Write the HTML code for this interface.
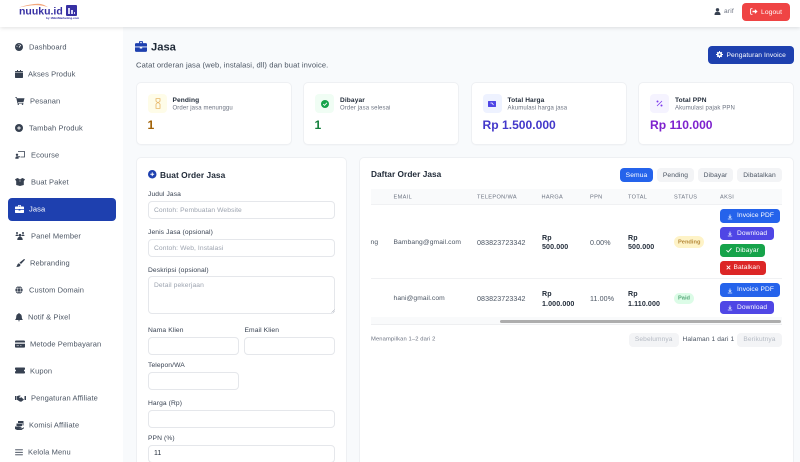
<!DOCTYPE html>
<html><head><meta charset="utf-8"><style>
html,body{margin:0;padding:0;width:800px;height:462px;overflow:hidden}
body{background:#f8fafc;font-family:"Liberation Sans",sans-serif;color:#374151}
#w{position:absolute;left:0;top:0;width:800px;height:462px;overflow:hidden;background:#f8fafc;filter:blur(.22px)}
.t{position:absolute;white-space:nowrap;transform:translateY(-50%);line-height:1.2}
.b{position:absolute;box-sizing:border-box}
.s{font-size:7.5px;color:#4b5563;letter-spacing:.1px}
.sw{color:#fff}
svg{position:absolute;overflow:visible}
.card{position:absolute;background:#fff;border:1px solid #eef0f3;border-radius:5px;box-sizing:border-box;box-shadow:0 1px 1px rgba(0,0,0,.02)}
.ic{position:absolute;width:19px;height:19px;border-radius:4px;top:94px}
.h1{font-size:6.6px;font-weight:bold;color:#1f2937;letter-spacing:.1px;margin-top:1px}
.h2{font-size:6px;color:#6b7280;letter-spacing:.12px;margin-top:1px}
.v{font-size:12.1px;font-weight:bold}
.l{font-size:6.7px;color:#374151;letter-spacing:.1px;margin-top:1px}
.in{position:absolute;box-sizing:border-box;background:#fff;border:1px solid #e5e7eb;border-radius:4px;height:18px}
.p{font-size:6.7px;color:#9ca3af;letter-spacing:.1px;margin-top:1px}
.th{font-size:5.6px;color:#6b7280;letter-spacing:.35px;margin-top:.6px}
.td{font-size:6.7px;color:#4b5563;letter-spacing:.1px;margin-top:.5px}
.n{font-size:7.1px;color:#4b5563;letter-spacing:.1px;margin-top:.5px}
.bd{font-size:7.1px;font-weight:bold;color:#1f2937;letter-spacing:.1px;margin-top:.5px}
.f{position:absolute;top:168px;height:14px;border-radius:4px;background:#f3f4f6;color:#4b5563;font-size:6.7px;text-align:center;line-height:15px;letter-spacing:.1px}
.a{position:absolute;height:13.5px;border-radius:3.5px;color:#fff;font-size:6.6px;line-height:14.5px;box-sizing:border-box;letter-spacing:.1px;white-space:nowrap}
.pg{position:absolute;top:333px;height:13.5px;border-radius:4px;background:#f3f4f6;color:#b4bac3;font-size:6.6px;text-align:center;line-height:14.5px;letter-spacing:.1px}
</style></head><body><div id="w">

<!-- sidebar -->
<div class="b" style="left:0;top:0;width:123px;height:462px;background:#fff"></div>
<!-- header -->
<div class="b" style="left:0;top:0;width:800px;height:27px;background:#fff;box-shadow:0 1px 4px rgba(0,0,0,.12)"></div>

<!-- logo -->
<svg style="left:19px;top:3px" width="30" height="6" viewBox="0 0 30 6"><path d="M0 4.500C7 2 14 1 19 .8c4 0 7 1.500 10 3.500C24 2.500 20 2 15 2.200 9 2.500 5 3.500 0 4.500z" fill="#f3a77c"/></svg>
<div class="t" style="left:19px;top:11.500px;font-size:10.500px;font-weight:bold;color:#3730a3">nuuku.id</div>
<div class="b" style="left:66px;top:5px;width:11px;height:11px;background:#3730a3;border-radius:1px"></div>
<div class="b" style="left:68px;top:8px;width:2px;height:6px;background:#d8d6f5"></div>
<div class="b" style="left:71px;top:10px;width:1.500px;height:4px;background:#d8d6f5"></div>
<div class="b" style="left:73.500px;top:11.500px;width:1.500px;height:2.500px;background:#d8d6f5"></div>
<div class="t" style="left:46px;top:18.500px;font-size:3px;color:#3730a3;font-weight:bold">by 1MiniMarketing.com</div>

<!-- header right -->
<svg style="left:714px;top:8px" width="7" height="7" viewBox="0 0 7 7"><circle cx="3.500" cy="1.800" r="1.700" fill="#374151"/><path d="M.5 7c0-2.500 1.200-3.200 3-3.200s3 .7 3 3.200z" fill="#374151"/></svg>
<div class="t" style="left:724px;top:12px;font-size:6.600px;color:#6b7280;letter-spacing:.2px">arif</div>
<div class="b" style="left:742px;top:3px;width:48px;height:17.500px;background:#ef4444;border-radius:4px"></div>
<svg style="left:750px;top:8px" width="8" height="7" viewBox="0 0 8 7"><path d="M2.500.7H1.200C.7.700.6 1 .6 1.400v4.200c0 .4.100.7.600.7h1.300" stroke="#fff" stroke-width=".9" fill="none"/><path d="M2.500 2.700h2.400V1.100l2.700 2.400-2.700 2.400V4.300H2.500z" fill="#fff"/></svg>
<div class="t sw" style="left:761px;top:12.500px;font-size:6.700px;letter-spacing:.1px">Logout</div>

<!-- nav active -->
<div class="b" style="left:8px;top:198px;width:108px;height:22.500px;background:#1e40af;border-radius:4px"></div>

<!-- nav icons -->
<svg style="left:15px;top:43px" width="8" height="8" viewBox="0 0 8 8"><circle cx="4" cy="4" r="4" fill="#374151"/><path d="M4 4.500 5.800 2" stroke="#fff" stroke-width=".8"/><circle cx="2" cy="3.200" r=".5" fill="#fff"/><circle cx="4" cy="1.600" r=".5" fill="#fff"/></svg>
<svg style="left:15px;top:70px" width="8" height="8" viewBox="0 0 8 8"><path d="M0 3h8v4.200c0 .4-.3.800-.7.800H.7C.3 8 0 7.600 0 7.200zM.7 1h6.600c.4 0 .7.300.7.700v.800H0v-.8C0 1.300.3 1 .7 1zM2 0h1v1.500H2zM5 0h1v1.500H5z" fill="#374151"/></svg>
<svg style="left:15px;top:97px" width="10" height="8" viewBox="0 0 10 8"><path d="M.3.300h1.600l.3 1h7.300l-1 3.700H3l.2.800h5.300v.7H2.500L1.300 1H.3z" fill="#374151"/><circle cx="3.300" cy="7.300" r=".7" fill="#374151"/><circle cx="7.500" cy="7.300" r=".7" fill="#374151"/></svg>
<svg style="left:15px;top:124px" width="8" height="8" viewBox="0 0 8 8"><circle cx="4" cy="4" r="4" fill="#374151"/><path d="M4 2.200v3.600M2.200 4h3.600" stroke="#fff" stroke-width=".9"/></svg>
<svg style="left:15px;top:151px" width="10" height="8" viewBox="0 0 10 8"><path d="M3 .5h6.500v5.500H5.500" stroke="#374151" stroke-width=".8" fill="none"/><circle cx="2" cy="3.800" r="1.200" fill="#374151"/><path d="M.3 7.700c0-1.800.7-2.500 1.700-2.500h3v1H3.600v1.500z" fill="#374151"/></svg>
<svg style="left:15px;top:178px" width="10" height="8" viewBox="0 0 10 8"><path d="M0 1.200 2.500 0 5 1.200 7.500 0 10 1.200 8.800 3.200V7l-3.800 1L1.200 7V3.200z" fill="#374151"/><path d="M5 1.500V4" stroke="#fff" stroke-width=".4"/></svg>
<svg style="left:15px;top:205px" width="9" height="8" viewBox="0 0 9 8"><path d="M3 1.500V.6c0-.3.200-.6.600-.6h1.800c.4 0 .6.300.6.600v.9h2.100c.5 0 .9.300.9.800v1.700H0V2.300c0-.5.400-.8.900-.8zM3.700.8v.7h1.600V.8zM0 4.700h3.600v.8h1.800v-.8H9v2.500c0 .5-.4.800-.9.800H.9C.4 8 0 7.700 0 7.200z" fill="#fff"/></svg>
<svg style="left:15px;top:232px" width="10" height="8" viewBox="0 0 10 8"><g fill="#374151"><circle cx="2" cy="1" r="1"/><circle cx="8" cy="1" r="1"/><circle cx="5" cy="3.200" r="1.300"/><path d="M.5 4c0-1 .5-1.500 1.500-1.500S3.500 3 3.500 4zM6.500 4c0-1 .5-1.500 1.500-1.500S9.500 3 9.500 4zM2.300 8c0-2 1-3.200 2.700-3.200S7.700 6 7.700 8z"/></g></svg>
<svg style="left:16px;top:259px" width="9" height="8" viewBox="0 0 9 8"><path d="M8.700.2c.3.300 0 .8-.3 1.200L5 5 3.500 3.600 7.400.5c.5-.4 1-.6 1.300-.3zM3 4.200 4.500 5.700c0 1.500-1.500 2.300-4.500 2.100C1.500 7 1 4.500 3 4.200z" fill="#374151"/></svg>
<svg style="left:15px;top:286px" width="8" height="8" viewBox="0 0 8 8"><circle cx="4" cy="4" r="3.700" fill="#374151"/><path d="M4 .2c-2.400 2-2.400 5.600 0 7.600M4 .2c2.400 2 2.400 5.600 0 7.600M.4 2.800h7.200M.4 5.200h7.200" stroke="#fff" stroke-width=".45" fill="none"/></svg>
<svg style="left:15px;top:313px" width="8" height="9" viewBox="0 0 8 9"><path d="M4 0c.4 0 .6.300.6.700C6 1 6.800 2.200 6.800 3.700c0 2 .6 2.500 1.200 3.300H0c.6-.8 1.200-1.300 1.200-3.300 0-1.500.8-2.700 2.200-3C3.400.3 3.600 0 4 0zM3 7.500h2C5 8.500 3 8.500 3 7.500z" fill="#374151"/></svg>
<svg style="left:15px;top:340px" width="10" height="8" viewBox="0 0 10 8"><path d="M1 .5h8c.5 0 1 .4 1 1v1H0v-1c0-.6.500-1 1-1zM0 3.700h10v3c0 .5-.5.900-1 .900H1c-.5 0-1-.4-1-.9z" fill="#374151"/><path d="M1.500 5.800h2.500M5 5.800h1.500" stroke="#fff" stroke-width=".5"/></svg>
<svg style="left:15px;top:367px" width="10" height="7" viewBox="0 0 10 7"><path d="M.8.500h8.400c.4 0 .8.300.8.700v1.300c-.6 0-1 .5-1 1s.4 1 1 1v1.300c0 .4-.4.700-.8.700H.8C.4 6.500 0 6.200 0 5.800V4.500c.6 0 1-.5 1-1s-.4-1-1-1V1.200C0 .8.400.5.800.5z" fill="#374151"/></svg>
<svg style="left:15px;top:395px" width="11" height="7" viewBox="0 0 11 7"><path d="M0 1h1.500v4H0zM9.500 1H11v4H9.500zM2 1.200l2-.7h1l.8.4L4 2.300c1 1 1.500.5 2.200-.2l2.800 2.500-2.500 2H5L2 4.800z" fill="#374151"/></svg>
<svg style="left:15px;top:421px" width="9" height="9" viewBox="0 0 9 9"><path d="M3 0h5.500v4.500H7.500V2H3zM1.500 2.500h5.500v2.500H1.500zM0 5.500h2l1.500-.3c1 0 2 .5 3 .5v1L5 7H3.500l3.500.3 2-1v1L6.500 9H2L0 8z" fill="#374151"/></svg>
<svg style="left:15px;top:449px" width="8" height="7" viewBox="0 0 8 7"><path d="M.5.800h7M.5 3.300h7M.5 5.800h7" stroke="#374151" stroke-width=".9" stroke-linecap="round"/></svg>

<!-- nav text -->
<div class="t s" style="left:29px;top:47px">Dashboard</div>
<div class="t s" style="left:28px;top:74px">Akses Produk</div>
<div class="t s" style="left:30px;top:101px">Pesanan</div>
<div class="t s" style="left:29px;top:128px">Tambah Produk</div>
<div class="t s" style="left:31px;top:155px">Ecourse</div>
<div class="t s" style="left:31px;top:182px">Buat Paket</div>
<div class="t s" style="left:29px;top:209px;color:#fff">Jasa</div>
<div class="t s" style="left:31px;top:236px">Panel Member</div>
<div class="t s" style="left:30px;top:263px">Rebranding</div>
<div class="t s" style="left:29px;top:290px">Custom Domain</div>
<div class="t s" style="left:28px;top:317px">Notif &amp; Pixel</div>
<div class="t s" style="left:30px;top:344px">Metode Pembayaran</div>
<div class="t s" style="left:30px;top:371px">Kupon</div>
<div class="t s" style="left:31px;top:398px">Pengaturan Affiliate</div>
<div class="t s" style="left:29px;top:425px">Komisi Affiliate</div>
<div class="t s" style="left:28px;top:452px">Kelola Menu</div>

<!-- page title -->
<svg style="left:135px;top:41px" width="12" height="11" viewBox="0 0 9 8"><path d="M3 1.500V.6c0-.3.200-.6.600-.6h1.800c.4 0 .6.300.6.600v.9h2.100c.5 0 .9.300.9.800v1.700H0V2.300c0-.5.400-.8.900-.8zM3.700.8v.7h1.600V.8zM0 4.700h3.600v.8h1.800v-.8H9v2.500c0 .5-.4.800-.9.800H.9C.4 8 0 7.700 0 7.200z" fill="#1e40af"/></svg>
<div class="t" style="left:151px;top:47.500px;font-size:11.200px;font-weight:bold;color:#1f2937">Jasa</div>
<div class="t" style="left:136px;top:64.500px;font-size:7.600px;color:#4b5563;letter-spacing:.1px">Catat orderan jasa (web, instalasi, dll) dan buat invoice.</div>

<div class="b" style="left:708px;top:46px;width:86px;height:17.500px;background:#1e40af;border-radius:4px"></div>
<svg style="left:715.500px;top:51px" width="7" height="7" viewBox="0 0 8 8"><circle cx="4" cy="4" r="2.200" fill="none" stroke="#fff" stroke-width="1.700"/><path d="M4 0v8M0 4h8M1.200 1.200l5.600 5.600M6.800 1.200 1.200 6.800" stroke="#fff" stroke-width="1.100"/><circle cx="4" cy="4" r="1.100" fill="#1e40af"/></svg>
<div class="t sw" style="left:726.500px;top:55.500px;font-size:6.700px;letter-spacing:.1px">Pengaturan Invoice</div>

<!-- stat cards -->
<div class="card" style="left:136px;top:81.500px;width:155.500px;height:63px"></div>
<div class="card" style="left:303px;top:81.500px;width:155.500px;height:63px"></div>
<div class="card" style="left:470.500px;top:81.500px;width:156px;height:63px"></div>
<div class="card" style="left:638px;top:81.500px;width:156px;height:63px"></div>

<div class="ic" style="left:148px;background:#fefce8"></div>
<svg style="left:154.500px;top:98px" width="6" height="11" viewBox="0 0 6 11"><path d="M.6.600h4.800M.6 10.400h4.800M1 .6v2.500c0 1 4 1.800 4 3.200v3.900M5 .6v2.500c0 1-4 1.800-4 3.200v3.900" stroke="#e7b667" stroke-width=".8" fill="none"/></svg>
<div class="t h1" style="left:172.500px;top:99.500px">Pending</div>
<div class="t h2" style="left:172.500px;top:108px">Order jasa menunggu</div>
<div class="t v" style="left:147.500px;top:125px;color:#a16207">1</div>

<div class="ic" style="left:315px;background:#f0fdf4"></div>
<svg style="left:320.500px;top:99.500px" width="8" height="8" viewBox="0 0 8 8"><circle cx="4" cy="4" r="4" fill="#16a34a"/><path d="M2.200 4.100 3.500 5.400 5.900 2.800" stroke="#fff" stroke-width=".9" fill="none"/></svg>
<div class="t h1" style="left:340px;top:99.500px">Dibayar</div>
<div class="t h2" style="left:340px;top:108px">Order jasa selesai</div>
<div class="t v" style="left:314.500px;top:125px;color:#15803d">1</div>

<div class="ic" style="left:482.500px;background:#eef2ff"></div>
<svg style="left:488px;top:100.500px" width="8" height="6" viewBox="0 0 8 6"><rect width="8" height="6" rx=".6" fill="#4f46e5"/><path d="M2.500 2h1.500l1.500 2" stroke="#fff" stroke-width=".7" fill="none"/></svg>
<div class="t h1" style="left:507.500px;top:99.500px">Total Harga</div>
<div class="t h2" style="left:507.500px;top:108px">Akumulasi harga jasa</div>
<div class="t v" style="left:482.500px;top:125px;color:#4338ca">Rp 1.500.000</div>

<div class="ic" style="left:650px;background:#f5f3ff"></div>
<svg style="left:656px;top:100px" width="7" height="7" viewBox="0 0 7 7"><path d="M6 1 1 6" stroke="#7c3aed" stroke-width=".8"/><circle cx="1.500" cy="1.500" r="1" fill="#7c3aed"/><circle cx="5.500" cy="5.500" r="1" fill="#7c3aed"/></svg>
<div class="t h1" style="left:675px;top:99.500px">Total PPN</div>
<div class="t h2" style="left:675px;top:108px">Akumulasi pajak PPN</div>
<div class="t v" style="left:650px;top:125px;color:#7e22ce">Rp 110.000</div>

<!-- form card -->
<div class="card" style="left:136px;top:157px;width:211px;height:320px"></div>
<svg style="left:147.500px;top:170px" width="8.500" height="8.500" viewBox="0 0 8 8"><circle cx="4" cy="4" r="4" fill="#1e40af"/><path d="M4 2.200v3.600M2.200 4h3.600" stroke="#fff" stroke-width=".9"/></svg>
<div class="t" style="left:160px;top:175px;font-size:8.400px;font-weight:bold;color:#1f2937;letter-spacing:.04px">Buat Order Jasa</div>

<div class="t l" style="left:148px;top:194px">Judul Jasa</div>
<div class="in" style="left:147.500px;top:201px;width:187.500px"></div>
<div class="t p" style="left:154px;top:210px">Contoh: Pembuatan Website</div>
<div class="t l" style="left:148px;top:232px">Jenis Jasa (opsional)</div>
<div class="in" style="left:147.500px;top:238.500px;width:187.500px"></div>
<div class="t p" style="left:154px;top:247.500px">Contoh: Web, Instalasi</div>
<div class="t l" style="left:148px;top:269.500px">Deskripsi (opsional)</div>
<div class="in" style="left:147.500px;top:276px;width:187.500px;height:38px"></div>
<div class="t p" style="left:154px;top:285px">Detail pekerjaan</div>
<svg style="left:331px;top:309px" width="4" height="4" viewBox="0 0 4 4"><path d="M3.500.5.500 3.500M3.500 2 2 3.500" stroke="#9ca3af" stroke-width=".5"/></svg>
<div class="t l" style="left:148px;top:329.500px">Nama Klien</div>
<div class="t l" style="left:244.500px;top:329.500px">Email Klien</div>
<div class="in" style="left:147.500px;top:336.500px;width:91px"></div>
<div class="in" style="left:244px;top:336.500px;width:91px"></div>
<div class="t l" style="left:148px;top:365px">Telepon/WA</div>
<div class="in" style="left:147.500px;top:372px;width:91px"></div>
<div class="t l" style="left:148px;top:403px">Harga (Rp)</div>
<div class="in" style="left:147.500px;top:409.500px;width:187.500px"></div>
<div class="t l" style="left:148px;top:438px">PPN (%)</div>
<div class="in" style="left:147.500px;top:445px;width:187.500px"></div>
<div class="t" style="left:154px;top:454px;font-size:7px;color:#1f2937">11</div>

<!-- table card -->
<div class="card" style="left:359px;top:157px;width:435px;height:320px"></div>
<div class="t" style="left:371px;top:175px;font-size:8.300px;font-weight:bold;color:#1f2937;letter-spacing:.04px">Daftar Order Jasa</div>
<div class="f" style="left:620px;width:33px;background:#2563eb;color:#fff">Semua</div>
<div class="f" style="left:657px;width:37px">Pending</div>
<div class="f" style="left:698px;width:35px">Dibayar</div>
<div class="f" style="left:737px;width:45px">Dibatalkan</div>

<div class="b" style="left:371px;top:189px;width:411px;height:16px;background:#f9fafb;border-bottom:1px solid #f0f1f3"></div>
<div class="t th" style="left:393.500px;top:197px">EMAIL</div>
<div class="t th" style="left:477px;top:197px">TELEPON/WA</div>
<div class="t th" style="left:541.500px;top:197px">HARGA</div>
<div class="t th" style="left:590px;top:197px">PPN</div>
<div class="t th" style="left:628px;top:197px">TOTAL</div>
<div class="t th" style="left:674px;top:197px">STATUS</div>
<div class="t th" style="left:720px;top:197px">AKSI</div>

<div class="b" style="left:371px;top:278px;width:411px;height:1px;background:#f0f1f3"></div>

<div class="t td" style="left:370.500px;top:242px">ng</div>
<div class="t td" style="left:393.500px;top:242px">Bambang@gmail.com</div>
<div class="t n" style="left:477px;top:242px">083823723342</div>
<div class="t bd" style="left:542px;top:237px">Rp</div>
<div class="t bd" style="left:542px;top:246.500px">500.000</div>
<div class="t n" style="left:590px;top:242px">0.00%</div>
<div class="t bd" style="left:628px;top:237px">Rp</div>
<div class="t bd" style="left:628px;top:246.500px">500.000</div>
<div class="b" style="left:674px;top:236px;width:30px;height:12px;border-radius:6px;background:#fef3c7"></div>
<div class="t" style="left:678px;top:242.500px;font-size:5.700px;font-weight:bold;color:#b5893a">Pending</div>

<div class="a" style="left:719.500px;top:209px;width:60px;background:#2563eb;padding-left:17.500px">Invoice PDF</div>
<div class="a" style="left:719.500px;top:226.500px;width:54.500px;background:#4f46e5;padding-left:17.500px">Download</div>
<div class="a" style="left:719.500px;top:243.500px;width:45px;background:#16a34a;padding-left:16px">Dibayar</div>
<div class="a" style="left:719.500px;top:261px;width:46.500px;background:#dc2626;padding-left:14px">Batalkan</div>
<svg style="left:727px;top:212.500px" width="6" height="7" viewBox="0 0 6 7"><path d="M3 1.500v3M1.700 3.500 3 4.800l1.300-1.300M.8 6h4.400" stroke="#dbeafe" stroke-width=".8" fill="none"/></svg>
<svg style="left:727px;top:230px" width="6" height="7" viewBox="0 0 6 7"><path d="M3 1.500v3M1.700 3.500 3 4.800l1.300-1.300M.8 6h4.400" stroke="#e0e7ff" stroke-width=".8" fill="none"/></svg>
<svg style="left:725.500px;top:247px" width="6" height="6" viewBox="0 0 6 6"><path d="M.5 3.200 2.200 5 5.500 1.200" stroke="#fff" stroke-width=".9" fill="none"/></svg>
<svg style="left:725.500px;top:265px" width="5" height="5" viewBox="0 0 5 5"><path d="M.7.700l3.600 3.600M4.300.7.700 4.300" stroke="#fff" stroke-width=".9"/></svg>

<div class="t td" style="left:393.500px;top:298.500px">hani@gmail.com</div>
<div class="t n" style="left:477px;top:298.500px">083823723342</div>
<div class="t bd" style="left:542px;top:293.500px">Rp</div>
<div class="t bd" style="left:542px;top:303px">1.000.000</div>
<div class="t n" style="left:590px;top:298.500px">11.00%</div>
<div class="t bd" style="left:628px;top:293.500px">Rp</div>
<div class="t bd" style="left:628px;top:303px">1.110.000</div>
<div class="b" style="left:674px;top:292.500px;width:19.500px;height:11.500px;border-radius:6px;background:#dcfce7"></div>
<div class="t" style="left:678px;top:299px;font-size:5.700px;font-weight:bold;color:#57a87a">Paid</div>
<div class="a" style="left:719.500px;top:283px;width:60px;background:#2563eb;padding-left:17.500px">Invoice PDF</div>
<div class="a" style="left:719.500px;top:300.500px;width:54.500px;background:#4f46e5;padding-left:17.500px">Download</div>
<svg style="left:727px;top:286.500px" width="6" height="7" viewBox="0 0 6 7"><path d="M3 1.500v3M1.700 3.500 3 4.800l1.300-1.300M.8 6h4.400" stroke="#dbeafe" stroke-width=".8" fill="none"/></svg>
<svg style="left:727px;top:304px" width="6" height="7" viewBox="0 0 6 7"><path d="M3 1.500v3M1.700 3.500 3 4.800l1.300-1.300M.8 6h4.400" stroke="#e0e7ff" stroke-width=".8" fill="none"/></svg>

<!-- scrollbar -->
<div class="b" style="left:371px;top:317px;width:411px;height:8px;background:#f9fafb;border-bottom:1px solid #eeeff1"></div>
<div class="b" style="left:500px;top:320px;width:280.500px;height:3px;background:#adadad;border-radius:2px"></div>

<!-- pagination -->
<div class="t" style="left:371px;top:340px;font-size:5.800px;color:#6b7280;letter-spacing:.12px">Menampilkan 1–2 dari 2</div>
<div class="pg" style="left:629px;width:49.500px">Sebelumnya</div>
<div class="t" style="left:682.500px;top:340px;font-size:6.600px;color:#4b5563;letter-spacing:.1px">Halaman 1 dari 1</div>
<div class="pg" style="left:737px;width:45px">Berikutnya</div>

</div></body></html>
